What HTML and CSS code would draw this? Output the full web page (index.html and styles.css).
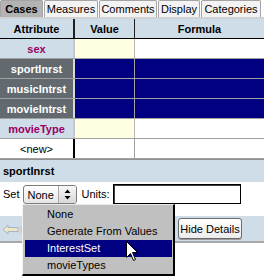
FILE: index.html
```html
<!DOCTYPE html>
<html>
<head>
<meta charset="utf-8">
<link rel="stylesheet" href="styles.css">
</head>
<body>
<div class="tabs">
  <div class="tab sel w1">Cases</div>
  <div class="tab w2">Measures</div>
  <div class="tab w3">Comments</div>
  <div class="tab w4">Display</div>
  <div class="tab w5">Categories</div>
</div>
<div class="table">
  <div class="row head"><div class="c attr">Attribute</div><div class="c val">Value</div><div class="c form">Formula</div></div>
  <div class="row light"><div class="c attr">sex</div><div class="c val"></div><div class="c form"></div></div>
  <div class="row dark"><div class="c attr">sportInrst</div><div class="c val"></div><div class="c form"></div></div>
  <div class="row dark"><div class="c attr">musicIntrst</div><div class="c val"></div><div class="c form"></div></div>
  <div class="row dark"><div class="c attr">movieIntrst</div><div class="c val"></div><div class="c form"></div></div>
  <div class="row light"><div class="c attr">movieType</div><div class="c val"></div><div class="c form"></div></div>
  <div class="row new"><div class="c attr">&lt;new&gt;</div><div class="c val"></div><div class="c form"></div></div>
</div>
<div class="dhead">sportInrst</div>
<div class="setrow">
  <span class="lbl">Set</span>
  <div class="popup"><span class="ptxt">None</span><span class="spin"><svg width="7" height="11" viewBox="0 0 7 11"><path d="M3.5 0.5 L6.5 4 L0.5 4 Z M0.5 7 L6.5 7 L3.5 10.5 Z" fill="#000"/></svg></span></div>
  <span class="lbl units">Units:</span>
  <div class="input"></div>
</div>
<div class="bar">
  <svg class="back" width="22" height="11" viewBox="0 0 22 11"><path d="M1 5.5 L6 1 L6 3.5 L16 3.5 L16 7.5 L6 7.5 L6 10 Z" fill="#ece6c4" stroke="#a9b3c4" stroke-width="1"/><rect x="18" y="2" width="4" height="7" fill="#c8ccd4"/></svg>
  <div class="btn">Hide Details</div>
</div>
<div class="menu">
  <div class="item">None</div>
  <div class="item">Generate From Values</div>
  <div class="item hi">InterestSet</div>
  <div class="item">movieTypes</div>
</div>
<svg class="cursor" width="13" height="21" viewBox="0 0 13 21"><path d="M0.5 0.5 L0.5 16.5 L4.5 12.5 L7.5 19.5 L9.5 18.5 L6.5 11.5 L11.5 11.5 Z" fill="#fff" stroke="#000" stroke-width="1" stroke-linejoin="miter"/></svg>
</body>
</html>
```
FILE: styles.css
```css
* { box-sizing: border-box; margin: 0; padding: 0; }
body {
  margin: 0;
  width: 264px;
  height: 278px;
  overflow: hidden;
  background: #fff;
  font: 11px "Liberation Sans", Arial, sans-serif;
  color: #000;
  position: relative;
}
.tabs {
  display: flex;
  gap: 1px;
  height: 19px;
  border-bottom: 2px solid #d2d2d2;
  background: #fff;
}
.tab {
  height: 17px;
  border: 1px solid #a4a4a4;
  border-bottom: none;
  background: #f3f3f3;
  display: flex;
  align-items: center;
  justify-content: center;
  border-radius: 2px 2px 0 0;
}
.tab.sel { background: #b3b3b3; font-weight: bold; }
.w1 { width: 43px; }
.w2 { width: 54px; }
.w3 { width: 58px; }
.w4 { width: 42px; }
.w5 { width: 60px; }

.row {
  display: grid;
  grid-template-columns: 75px 60px 1fr;
  height: 20px;
  border-bottom: 1px solid #a0a0a0;
}
.c { display: flex; align-items: center; justify-content: center; }
.attr { border-right: 2px solid #c8c8c8; font-weight: bold; }
.val { border-right: 1px solid #a0a0a0; }
.head { border-bottom-color: #000; background: #cedde7; }
.head .c { font-weight: bold; }
.head .attr { border-right-color: #202020; }
.head .val { border-right-color: #202020; }
.light .attr { background: #cedde7; color: #990066; }
.light .val { background: #ffffe2; border-right-color: #b8b8b8; }
.dark .attr { background: #626a70; color: #fff; border-right-color: #d8d8d8; }
.dark .val, .dark .form { background: #000080; }
.new .attr { font-weight: normal; border-right-color: #000; }

.dhead {
  height: 23px;
  border-top: 1px solid #909090;
  background: #cedde7;
  font-weight: bold;
  display: flex;
  align-items: center;
  padding-left: 3px;
}
.setrow {
  height: 34px;
  display: flex;
  align-items: flex-start;
  padding: 2px 0 0 3px;
}
.lbl { height: 20px; line-height: 20px; }
.popup {
  margin: 1px 0 0 3px;
  width: 54px;
  height: 19px;
  border: 1px solid #7c7c7c;
  border-radius: 3px;
  background: linear-gradient(#ffffff, #e6e6e6);
  display: flex;
  align-items: center;
}
.ptxt { flex: 1; padding-left: 4px; }
.spin {
  width: 18px;
  height: 17px;
  border-left: 1px solid #a8a8a8;
  border-radius: 0 2px 2px 0;
  background: linear-gradient(#f8f8f8, #d8d8d8);
  display: flex;
  align-items: center;
  justify-content: center;
}
.units { margin-left: 5px; }
.input {
  margin-left: 3px;
  width: 128px;
  height: 20px;
  border: 1px solid #000;
  box-shadow: inset 1px 1px 0 #404040;
  background: #fff;
}
.bar {
  height: 27px;
  background: #cedde7;
  border-bottom: 2px solid #a8a8a8;
  display: flex;
  align-items: center;
  padding-left: 2px;
}
.back { margin-top: 2px; }
.btn {
  margin-left: auto;
  margin-right: 22px;
  width: 64px;
  height: 21px;
  border: 1px solid #6a6a6a;
  border-radius: 3px;
  background: linear-gradient(#ffffff, #ececec);
  box-shadow: 0 1px 0 #9a9a9a;
  display: flex;
  align-items: center;
  justify-content: center;
}
.menu {
  position: absolute;
  left: 22px;
  top: 204px;
  width: 153px;
  height: 72px;
  background: #c0c0c0;
  border-top: 1px solid #e8e8e8;
  border-left: 1px solid #f4f4f4;
  border-right: 2px solid #000;
  border-bottom: 2px solid #000;
  padding: 1px 1px 0 2px;
}
.item {
  height: 17px;
  line-height: 17px;
  padding-left: 22px;
  white-space: nowrap;
}
.item.hi { background: #000080; color: #fff; }
.cursor {
  position: absolute;
  left: 126px;
  top: 241px;
}
```
